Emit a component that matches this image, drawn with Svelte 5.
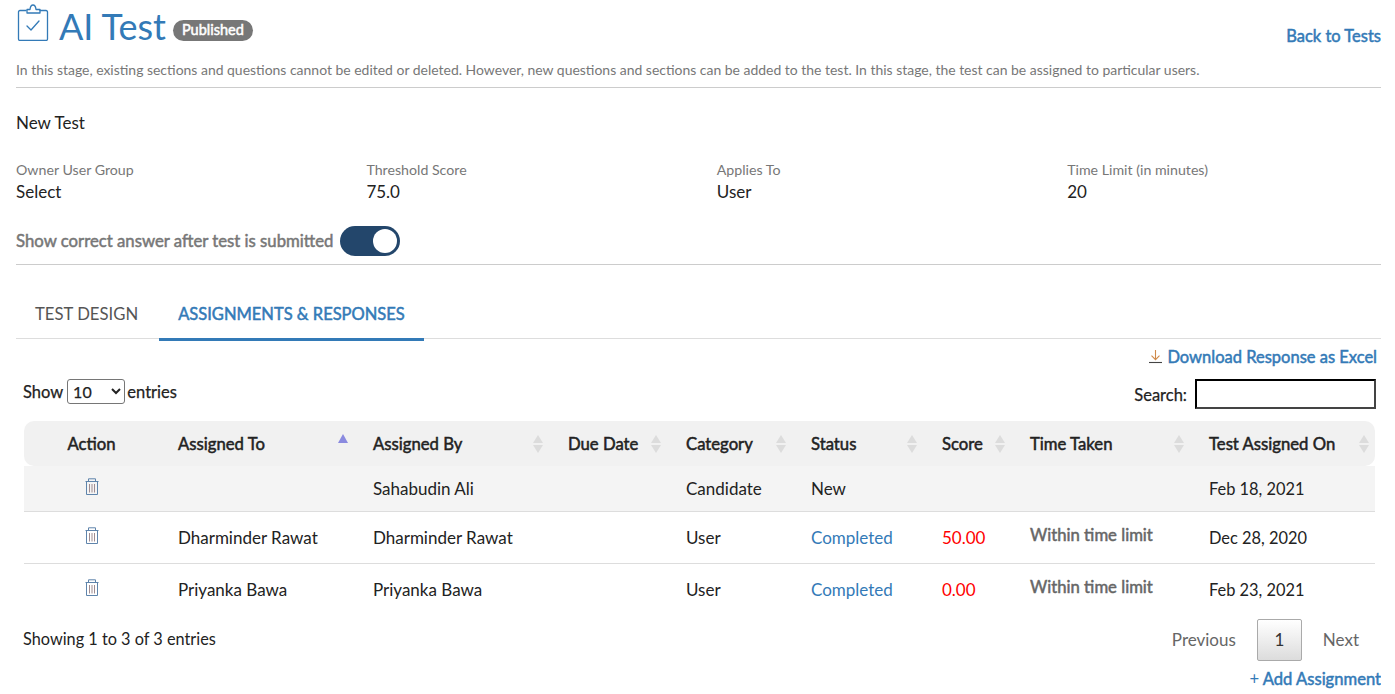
<script>
  const fields = [
    { label: 'Owner User Group', value: 'Select' },
    { label: 'Threshold Score', value: '75.0' },
    { label: 'Applies To', value: 'User' },
    { label: 'Time Limit (in minutes)', value: '20' }
  ];

  const columns = [
    { name: 'Action', cls: 'c-action' },
    { name: 'Assigned To', cls: 'c-to', sort: 'asc' },
    { name: 'Assigned By', cls: 'c-by', sort: 'both' },
    { name: 'Due Date', cls: 'c-due', sort: 'both' },
    { name: 'Category', cls: 'c-cat', sort: 'both' },
    { name: 'Status', cls: 'c-status', sort: 'both' },
    { name: 'Score', cls: 'c-score', sort: 'both' },
    { name: 'Time Taken', cls: 'c-time', sort: 'both' },
    { name: 'Test Assigned On', cls: 'c-on', sort: 'both' }
  ];

  const rows = [
    { to: '', by: 'Sahabudin Ali', category: 'Candidate', status: 'New', score: '', time: '', on: 'Feb 18, 2021' },
    { to: 'Dharminder Rawat', by: 'Dharminder Rawat', category: 'User', status: 'Completed', score: '50.00', time: 'Within time limit', on: 'Dec 28, 2020' },
    { to: 'Priyanka Bawa', by: 'Priyanka Bawa', category: 'User', status: 'Completed', score: '0.00', time: 'Within time limit', on: 'Feb 23, 2021' }
  ];
</script>

<div class="page">
  <header class="head">
    <div class="title">
      <svg class="clip" width="34" height="38" viewBox="0 0 34 38" fill="none" stroke="#337ab7" stroke-width="1.3" stroke-linejoin="round" stroke-linecap="round">
        <path d="M10 7.5H4Q2.5 7.5 2.5 9V36Q2.5 37.5 4 37.5H30Q31.5 37.5 31.5 36V9Q31.5 7.5 30 7.5H24" />
        <path d="M11 10V6.5H14Q14.5 2 17 2Q19.5 2 20 6.5H24V10Z" />
        <path d="M11 23L15 27L23 18" />
      </svg>
      <h1>AI Test</h1>
      <span class="badge">Published</span>
    </div>
    <a class="back">Back to Tests</a>
  </header>
  <p class="hint">In this stage, existing sections and questions cannot be edited or deleted. However, new questions and sections can be added to the test. In this stage, the test can be assigned to particular users.</p>

  <div class="name">New Test</div>

  <div class="fields">
    {#each fields as f}
      <div>
        <div class="label">{f.label}</div>
        <div class="value">{f.value}</div>
      </div>
    {/each}
  </div>

  <div class="toggle-row">
    <span class="toggle-label">Show correct answer after test is submitted</span>
    <span class="toggle"><span class="knob"></span></span>
  </div>

  <nav class="tabs">
    <a class="tab">TEST DESIGN</a>
    <a class="tab active">ASSIGNMENTS &amp; RESPONSES</a>
  </nav>

  <div class="download">
    <a>
      <svg width="15" height="15" viewBox="0 0 15 15" fill="none" stroke-width="1.1">
        <path d="M7.5 1V10.5M3.5 6.7L7.5 10.7L11.5 6.7" stroke="#d08a4a" />
        <path d="M1 13.5H14" stroke="#444" />
      </svg>
      Download Response as Excel
    </a>
  </div>

  <div class="controls">
    <label class="length">Show
      <select><option>10</option></select>
      entries</label>
    <label class="search"><span>Search:</span> <input type="text" /></label>
  </div>

  <table>
    <colgroup>
      {#each columns as c}<col class={c.cls} />{/each}
    </colgroup>
    <thead>
      <tr>
        {#each columns as c, i}
          <th class:center={i === 0}>
            {c.name}
            {#if c.sort === 'asc'}
              <span class="sort-up"></span>
            {:else if c.sort === 'both'}
              <span class="sort-both"></span>
            {/if}
          </th>
        {/each}
      </tr>
    </thead>
    <tbody>
      {#each rows as r}
        <tr>
          <td class="center">
            <svg class="trash" width="14" height="17" viewBox="0 0 14 17" fill="none" stroke="#5f84ab" stroke-width="1">
              <path d="M0.5 3.5H13.5M3.5 3V0.8H10.5V3" />
              <path d="M1.5 3.5V16.5H12.5V3.5" />
              <path d="M4.5 6V14.5M7 6V14.5M9.5 6V14.5" stroke="#a08c90" />
            </svg>
          </td>
          <td>{r.to}</td>
          <td>{r.by}</td>
          <td></td>
          <td>{r.category}</td>
          <td class:link={r.status === 'Completed'}>{r.status}</td>
          <td class="score">{r.score}</td>
          <td class="time">{r.time}</td>
          <td class="date">{r.on}</td>
        </tr>
      {/each}
    </tbody>
  </table>

  <div class="foot">
    <div class="info">Showing 1 to 3 of 3 entries</div>
    <div class="pager">
      <a>Previous</a>
      <a class="current">1</a>
      <a>Next</a>
    </div>
  </div>

  <div class="add"><a><span class="plus">+</span> Add Assignment</a></div>
</div>

<style>
  :global(body) {
    margin: 0;
    background: #fff;
    font-family: Lato, "Open Sans", sans-serif;
    font-size: 17px;
    color: #222;
  }

  .page {
    width: 1365px;
    height: 694px;
    overflow: hidden;
    padding-left: 16px;
  }

  a {
    color: #337ab7;
    text-decoration: none;
  }

  .head {
    display: flex;
    justify-content: space-between;
    height: 55px;
  }

  .title {
    display: flex;
    align-items: flex-start;
  }

  .clip {
    margin-top: 3px;
  }

  h1 {
    margin: 4px 0 0 9px;
    font-size: 36px;
    line-height: 44px;
    font-weight: 400;
    color: #337ab7;
  }

  .badge {
    margin: 20px 0 0 7px;
    height: 21px;
    line-height: 20px;
    padding: 0 9px;
    border-radius: 11px;
    background: #777;
    color: #fff;
    font-size: 14.5px;
    -webkit-text-stroke: 0.5px #fff;
  }

  .back {
    margin-top: 26px;
    font-size: 16.5px;
    line-height: 20px;
    -webkit-text-stroke: 0.5px #337ab7;
  }

  .hint {
    margin: 0;
    padding-bottom: 10px;
    height: 22px;
    line-height: 29px;
    border-bottom: 1px solid #ccc;
    font-size: 13.96px;
    color: #777;
  }

  .name {
    margin-top: 25px;
    line-height: 20px;
  }

  .fields {
    display: grid;
    grid-template-columns: repeat(4, 350.4px);
    margin-top: 27px;
  }

  .label {
    font-size: 14.2px;
    line-height: 20px;
    color: #777;
  }

  .value {
    line-height: 24px;
  }

  .toggle-row {
    display: flex;
    align-items: center;
    gap: 7px;
    height: 30px;
    margin-top: 22px;
    padding-bottom: 8px;
    border-bottom: 1px solid #ccc;
    color: #777;
    font-size: 16.74px;
    -webkit-text-stroke: 0.5px #777;
  }

  .toggle-label {
    margin-top: -2px;
  }

  .toggle {
    display: block;
    position: relative;
    width: 60px;
    height: 30px;
    border-radius: 15px;
    background: #23466b;
  }

  .knob {
    position: absolute;
    right: 3px;
    top: 3px;
    width: 24px;
    height: 24px;
    border-radius: 50%;
    background: #fff;
  }

  .tabs {
    display: flex;
    gap: 2px;
    height: 74px;
    box-sizing: border-box;
    border-bottom: 1px solid #ddd;
  }

  .tab {
    margin-top: 26px;
    height: 47px;
    line-height: 46px;
    padding: 0 19px;
    font-size: 16.7px;
    color: #555;
  }

  .tab.active {
    font-size: 16.5px;
    color: #337ab7;
    border-bottom: 3px solid #337ab7;
    -webkit-text-stroke: 0.5px #337ab7;
  }

  .download {
    display: flex;
    justify-content: flex-end;
    margin-top: 8px;
    padding-right: 4px;
    font-size: 16.5px;
    line-height: 20px;
    -webkit-text-stroke: 0.5px #337ab7;
  }

  .download svg {
    vertical-align: -1px;
  }

  .controls {
    display: flex;
    justify-content: space-between;
    padding: 0 5px 0 7px;
    height: 54px;
    font-size: 16.5px;
    -webkit-text-stroke: 0.25px #222;
  }

  .length {
    margin-top: 12px;
    line-height: 26px;
  }

  select {
    width: 58px;
    height: 25px;
    margin-right: -2px;
    font: inherit;
    font-size: 16px;
    color: #222;
    padding: 0 0 0 1px;
    border: 1px solid #767676;
    border-radius: 3px;
    background: #fff;
  }

  .search {
    display: flex;
    align-items: center;
    gap: 8px;
    height: 30px;
    margin-top: 12px;
  }

  .search span {
    margin-top: 2px;
  }

  input {
    width: 181px;
    height: 30px;
    box-sizing: border-box;
    border: 2px inset #444;
    background: #fff;
    padding: 0;
  }

  table {
    width: 1351px;
    margin-left: 8px;
    border-collapse: separate;
    border-spacing: 0;
    table-layout: fixed;
  }

  .c-action { width: 143px; }
  .c-to { width: 195px; }
  .c-by { width: 195px; }
  .c-due { width: 118px; }
  .c-cat { width: 125px; }
  .c-status { width: 131px; }
  .c-score { width: 88px; }
  .c-time { width: 179px; }
  .c-on { width: 177px; }

  th {
    position: relative;
    height: 45px;
    padding: 0 11px;
    background: #f1f1f1;
    text-align: left;
    font-weight: 400;
    font-size: 16.7px;
    color: #222;
    -webkit-text-stroke: 0.5px #222;
  }

  th:first-child {
    border-radius: 10px 0 0 10px;
  }

  th:last-child {
    border-radius: 0 10px 10px 0;
  }

  th:last-child .sort-both {
    right: 6px;
  }

  th.center,
  td.center {
    text-align: center;
    padding-right: 19px;
  }

  .sort-up {
    position: absolute;
    right: 14px;
    top: 13px;
    border-left: 5px solid transparent;
    border-right: 5px solid transparent;
    border-bottom: 9px solid #8a8adf;
  }

  .sort-both {
    position: absolute;
    right: 14px;
    top: 14px;
    width: 10px;
    height: 18px;
  }

  .sort-both::before,
  .sort-both::after {
    content: '';
    position: absolute;
    left: 0;
    border-left: 5px solid transparent;
    border-right: 5px solid transparent;
  }

  .sort-both::before {
    top: 0;
    border-bottom: 8px solid #dcdcdc;
  }

  .sort-both::after {
    bottom: 0;
    border-top: 8px solid #dcdcdc;
  }

  td {
    box-sizing: border-box;
    padding: 0 11px;
    height: 52px;
    border-bottom: 1px solid #ddd;
    color: #222;
  }

  tbody tr:first-child td {
    background: #f4f4f4;
    height: 46px;
  }

  tbody tr:last-child td {
    border-bottom: 0;
    height: 51px;
  }

  .trash {
    display: block;
    margin: -4px auto 0;
  }

  td.link {
    color: #337ab7;
  }

  td.score {
    color: #f00;
  }

  td.time {
    color: #666;
    font-size: 16.7px;
    padding-bottom: 5px;
    -webkit-text-stroke: 0.5px #666;
  }

  td.date {
    font-size: 16.4px;
  }

  .foot {
    display: flex;
    justify-content: space-between;
    padding: 0 0 0 7px;
  }

  .info {
    font-size: 16.3px;
    line-height: 20px;
    margin-top: 14px;
  }

  .pager {
    display: flex;
    align-items: center;
    margin-top: 4px;
    height: 42px;
    padding-right: 1px;
  }

  .pager a {
    color: #666;
    padding: 0 21px;
    line-height: 40px;
  }

  .pager a.current {
    width: 45px;
    height: 42px;
    padding: 0;
    box-sizing: border-box;
    text-align: center;
    border: 1px solid #aaa;
    border-radius: 2px;
    background: linear-gradient(#fff, #dcdcdc);
    color: #333;
  }

  .add {
    display: flex;
    justify-content: flex-end;
    font-size: 16.6px;
    line-height: 20px;
    margin-top: 8px;
    -webkit-text-stroke: 0.5px #337ab7;
  }

  .plus {
    -webkit-text-stroke: 0;
  }
</style>
